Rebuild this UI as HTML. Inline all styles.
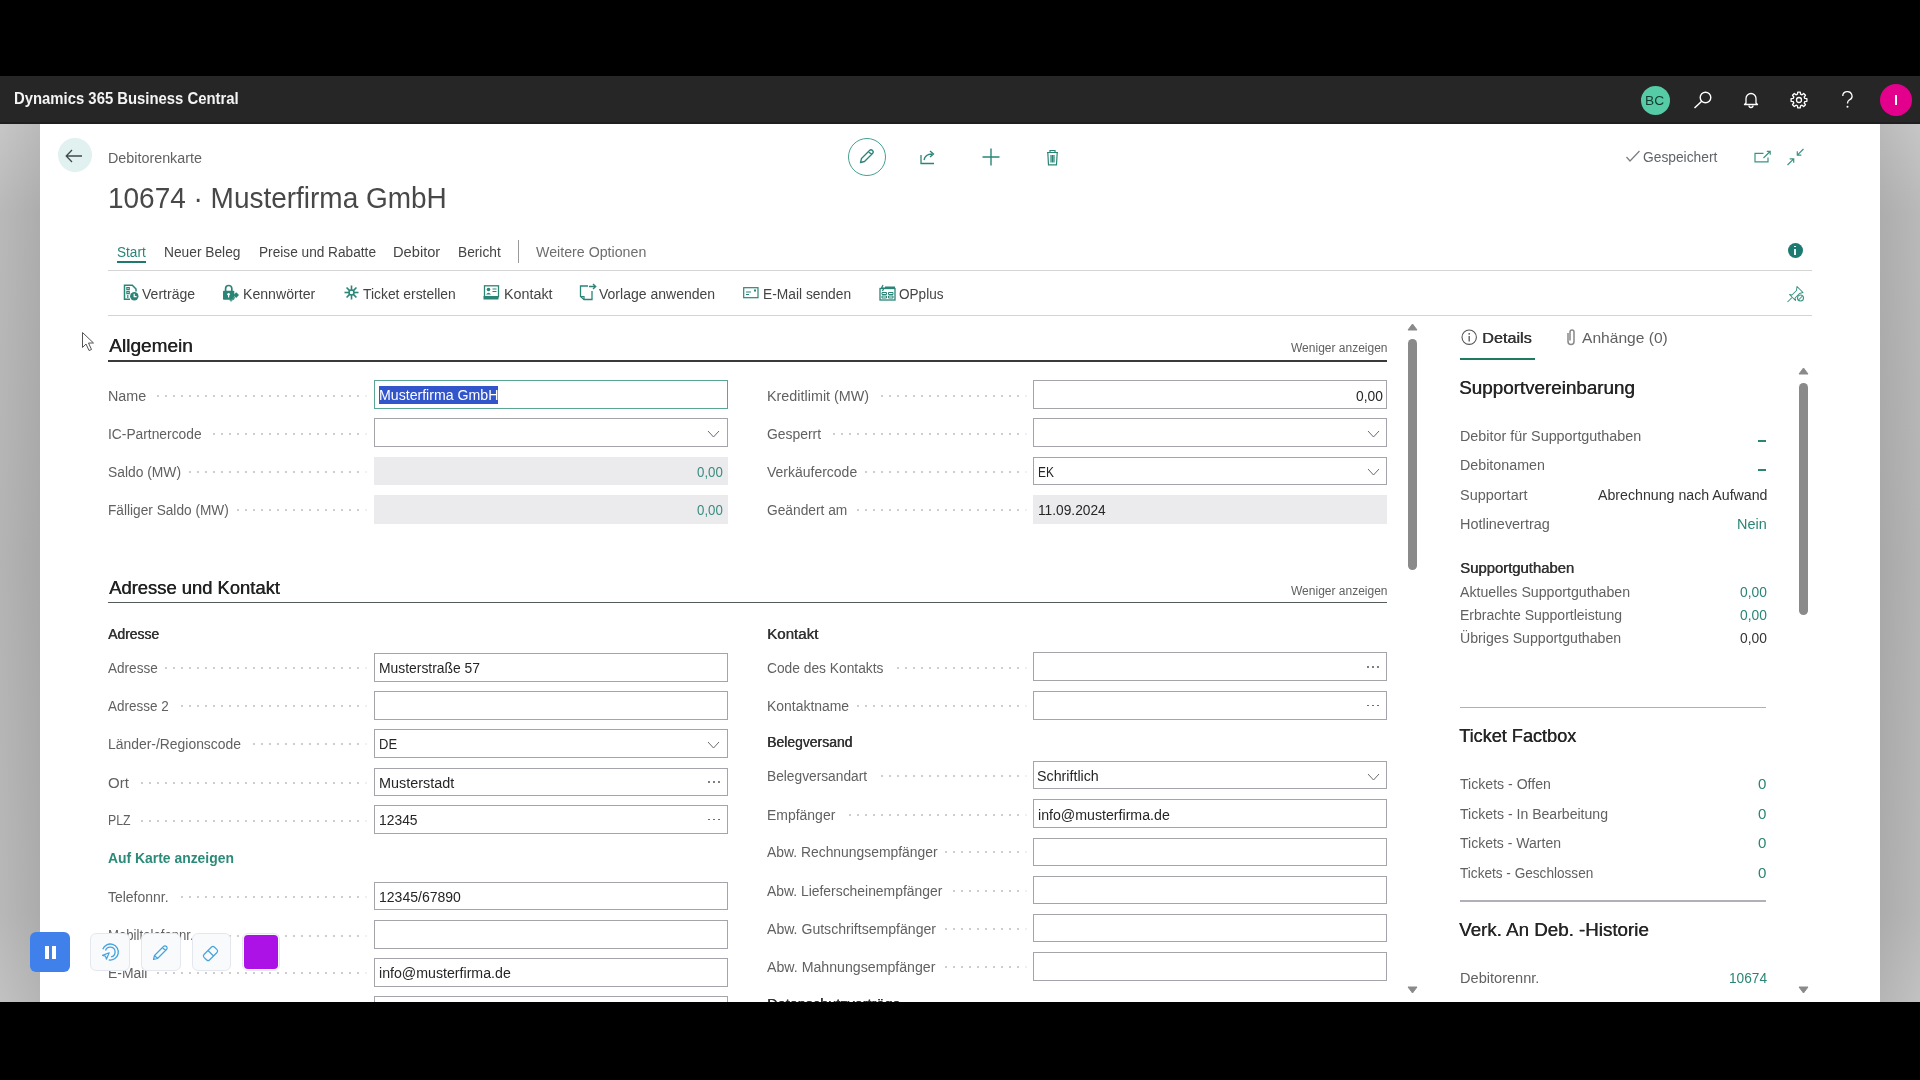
<!DOCTYPE html>
<html><head><meta charset="utf-8"><title>Debitorenkarte</title>
<style>
html,body{margin:0;padding:0;width:1920px;height:1080px;overflow:hidden;background:#000;}
body{position:relative;font-family:"Liberation Sans", sans-serif;}
.t{position:absolute;white-space:nowrap;display:inline-block;}
svg{overflow:visible}
</style></head><body>
<div style="position:absolute;left:0px;top:0px;width:1920px;height:76px;background:#000"></div>
<div style="position:absolute;left:0px;top:76px;width:1920px;height:48px;background:#262626"></div>
<div style="position:absolute;left:0px;top:122px;width:1920px;height:2px;background:#1e1e1e"></div>
<div style="position:absolute;left:0px;top:124px;width:40px;height:878px;background:linear-gradient(to bottom,#c4c4c4 0%,#b6b6b6 10%,#b1b1b1 50%,#b5b5b5 90%,#bfbfbf 100%)"></div>
<div style="position:absolute;left:0px;top:124px;width:40px;height:878px;background:linear-gradient(to right,rgba(255,255,255,0.04),rgba(0,0,0,0.05))"></div>
<div style="position:absolute;left:1880px;top:124px;width:40px;height:878px;background:linear-gradient(to bottom,#c4c4c4 0%,#b6b6b6 10%,#b1b1b1 50%,#b5b5b5 90%,#bfbfbf 100%)"></div>
<div style="position:absolute;left:1880px;top:124px;width:40px;height:878px;background:linear-gradient(to left,rgba(255,255,255,0.04),rgba(0,0,0,0.05))"></div>
<div style="position:absolute;left:40px;top:124px;width:1840px;height:878px;background:#fff"></div>
<span class="t" style="left:14.48px;top:89.93px;font-size:16.5px;line-height:16.5px;color:#f4f4f4;font-weight:700;transform:scaleX(0.9009);transform-origin:0 0;">Dynamics 365 Business Central</span>
<div style="position:absolute;left:1640.5px;top:85.5px;width:29px;height:29px;border-radius:50%;background:#55cca6"></div>
<span class="t" style="left:1644.85px;top:93.79px;font-size:13px;line-height:13px;color:#163a2e;font-weight:400;transform:scaleX(1.0578);transform-origin:0 0;">BC</span>
<svg style="position:absolute;left:1693px;top:91px" width="20" height="18" viewBox="0 0 20 18"><circle cx="12.5" cy="6.5" r="5.3" fill="none" stroke="#fff" stroke-width="1.4"/><line x1="8.7" y1="10.3" x2="1.5" y2="17" stroke="#fff" stroke-width="1.5"/></svg>
<svg style="position:absolute;left:1743px;top:92px" width="16" height="16" viewBox="0 0 16 16"><path d="M3 11 V6.5 A5 5 0 0 1 13 6.5 V11 L14.5 12.5 H1.5 Z" fill="none" stroke="#fff" stroke-width="1.3" stroke-linejoin="round"/><path d="M6 13.5 A2 2 0 0 0 10 13.5" fill="none" stroke="#fff" stroke-width="1.3"/></svg>
<svg style="position:absolute;left:1790px;top:92px" width="18" height="16" viewBox="0 0 18 16"><polygon points="14.80,6.46 16.90,6.73 16.90,9.27 14.80,9.54 14.19,11.01 15.49,12.68 13.68,14.49 12.01,13.19 10.54,13.80 10.27,15.90 7.73,15.90 7.46,13.80 5.99,13.19 4.32,14.49 2.51,12.68 3.81,11.01 3.20,9.54 1.10,9.27 1.10,6.73 3.20,6.46 3.81,4.99 2.51,3.32 4.32,1.51 5.99,2.81 7.46,2.20 7.73,0.10 10.27,0.10 10.54,2.20 12.01,2.81 13.68,1.51 15.49,3.32 14.19,4.99" fill="none" stroke="#fff" stroke-width="1.3" stroke-linejoin="round"/><circle cx="9" cy="8" r="2.5" fill="none" stroke="#fff" stroke-width="1.3"/></svg>
<svg style="position:absolute;left:1841px;top:91px" width="13" height="18" viewBox="0 0 13 18"><path d="M1.8 5 A4.6 4.3 0 1 1 8.5 8.8 C7 9.8 6.5 10.5 6.5 12.5" fill="none" stroke="#fff" stroke-width="1.3"/><circle cx="6.5" cy="15.8" r="1" fill="#fff"/></svg>
<div style="position:absolute;left:1880px;top:84px;width:32px;height:32px;border-radius:50%;background:#e3008c"></div>
<div style="position:absolute;left:1895.3px;top:95px;width:1.5px;height:10px;background:#fff"></div>
<div style="position:absolute;left:57.5px;top:138px;width:34px;height:34px;border-radius:50%;background:#e0f1ef"></div>
<svg style="position:absolute;left:65px;top:149px" width="18" height="14" viewBox="0 0 18 14"><path d="M7 1 L1.2 7 L7 13 M1.2 7 H17" fill="none" stroke="#3f4a4a" stroke-width="1.3"/></svg>
<span class="t" style="left:107.90px;top:150.55px;font-size:14px;line-height:14px;color:#616161;font-weight:400;transform:scaleX(1.0230);transform-origin:0 0;">Debitorenkarte</span>
<span class="t" style="left:107.53px;top:183.02px;font-size:29.5px;line-height:29.5px;color:#484848;font-weight:400;transform:scaleX(0.9478);transform-origin:0 0;">10674 · Musterfirma GmbH</span>
<div style="position:absolute;left:847.8px;top:138px;width:38px;height:38px;border-radius:50%;border:1.5px solid #45a090;box-sizing:border-box"></div>
<svg style="position:absolute;left:857px;top:148px" width="18" height="18" viewBox="0 0 18 18"><path d="M3.5 14.5 L4.5 10.5 L12.5 2.5 A1.4 1.4 0 0 1 15.5 5.5 L7.5 13.5 Z M11.5 3.5 L14.5 6.5" fill="none" stroke="#2a8577" stroke-width="1.3" stroke-linejoin="round"/></svg>
<svg style="position:absolute;left:919px;top:148px" width="18" height="17" viewBox="0 0 18 17"><path d="M2 7 V15.5 H15" fill="none" stroke="#2a8577" stroke-width="1.3"/><path d="M5 12 C6 7.5 9 6 13 6 M11 3 L14.5 6 L11 9" fill="none" stroke="#2a8577" stroke-width="1.3"/></svg>
<svg style="position:absolute;left:982px;top:148px" width="18" height="18" viewBox="0 0 18 18"><path d="M9 0.5 V17.5 M0.5 9 H17.5" stroke="#2a8577" stroke-width="1.4"/></svg>
<svg style="position:absolute;left:1045px;top:148px" width="15" height="18" viewBox="0 0 15 18"><path d="M2 4.5 H13 M5 4.5 V2.5 H10 V4.5 M2.8 4.5 L3.5 16.8 H11.5 L12.2 4.5 M6 7 V14.5 M7.5 7 V14.5 M9 7 V14.5" fill="none" stroke="#2a8577" stroke-width="1.2"/></svg>
<svg style="position:absolute;left:1625px;top:150px" width="16" height="13" viewBox="0 0 16 13"><path d="M1.5 7 L5 11 L14.5 1" fill="none" stroke="#7a7d82" stroke-width="1.2"/></svg>
<span class="t" style="left:1643.28px;top:150.22px;font-size:14.5px;line-height:14.5px;color:#5f646a;font-weight:400;transform:scaleX(0.9508);transform-origin:0 0;">Gespeichert</span>
<svg style="position:absolute;left:1753px;top:149px" width="19" height="15" viewBox="0 0 19 15"><path d="M10.5 4.4 H2 V12.9 H15 V8.5" fill="none" stroke="#3a9483" stroke-width="1.2"/><path d="M10.5 9 L17 2.5 M13.8 2.3 H17.2 V5.7" fill="none" stroke="#3a9483" stroke-width="1.2"/></svg>
<svg style="position:absolute;left:1786px;top:148px" width="19" height="18" viewBox="0 0 19 18"><path d="M17.5 1 L11.3 7.2 M11.3 3.2 V7.2 H15.3 M1.5 17 L7.7 10.8 M3.7 10.8 H7.7 V14.8" fill="none" stroke="#3a9483" stroke-width="1.2"/></svg>
<span class="t" style="left:117.30px;top:245.15px;font-size:14px;line-height:14px;color:#2a8577;font-weight:400;transform:scaleX(0.9707);transform-origin:0 0;">Start</span>
<div style="position:absolute;left:117px;top:261px;width:29px;height:2.2px;background:#1f7a6e"></div>
<span class="t" style="left:164.10px;top:245.15px;font-size:14px;line-height:14px;color:#444;font-weight:400;transform:scaleX(0.9823);transform-origin:0 0;">Neuer Beleg</span>
<span class="t" style="left:258.70px;top:245.15px;font-size:14px;line-height:14px;color:#444;font-weight:400;transform:scaleX(0.9760);transform-origin:0 0;">Preise und Rabatte</span>
<span class="t" style="left:393.30px;top:245.15px;font-size:14px;line-height:14px;color:#444;font-weight:400;transform:scaleX(1.0471);transform-origin:0 0;">Debitor</span>
<span class="t" style="left:458.30px;top:245.15px;font-size:14px;line-height:14px;color:#444;font-weight:400;transform:scaleX(0.9800);transform-origin:0 0;">Bericht</span>
<div style="position:absolute;left:518px;top:240px;width:1px;height:23px;background:#9a9a9a"></div>
<span class="t" style="left:536.00px;top:245.15px;font-size:14px;line-height:14px;color:#6e6e6e;font-weight:400;transform:scaleX(1.0149);transform-origin:0 0;">Weitere Optionen</span>
<div style="position:absolute;left:1787.5px;top:242.5px;width:15px;height:15px;border-radius:50%;background:#1d7a70"></div>
<div style="position:absolute;left:1794.3px;top:248.8px;width:1.4px;height:5.8px;background:#e8f4f2"></div>
<div style="position:absolute;left:1794.3px;top:245.8px;width:1.4px;height:1.5px;background:#e8f4f2"></div>
<div style="position:absolute;left:108px;top:270px;width:1704px;height:1.2px;background:#d4d4d4"></div>
<svg style="position:absolute;left:123px;top:284px" width="17" height="17" viewBox="0 0 17 17"><path d="M7 15.3 H1.5 V1.3 H9.3 L13 5 V7.5" fill="none" stroke="#2a8577" stroke-width="1.5"/><path d="M3.8 3.6 H6.3 V5.6 H3.8 Z M3.8 7.6 H6.3 V9.6 H3.8 Z" fill="none" stroke="#2a8577" stroke-width="1.1"/><path d="M4.8 11 V14" stroke="#2a8577" stroke-width="1.2"/><circle cx="11.3" cy="12.3" r="4.2" fill="#2a8577"/><path d="M11.2 9.8 V12.6 H13.6" fill="none" stroke="#fff" stroke-width="1.2"/></svg>
<span class="t" style="left:142.30px;top:287.15px;font-size:14px;line-height:14px;color:#444;font-weight:400;transform:scaleX(1.0023);transform-origin:0 0;">Verträge</span>
<svg style="position:absolute;left:222px;top:284px" width="18" height="17" viewBox="0 0 18 17"><path d="M3.6 7 V4.6 A3.1 3.1 0 0 1 9.8 4.6 V7" fill="none" stroke="#2a8577" stroke-width="1.7"/><rect x="1" y="6.8" width="11.3" height="9" rx="0.8" fill="#2a8577"/><circle cx="6.6" cy="10.3" r="1.3" fill="#fff"/><rect x="6" y="10.5" width="1.2" height="3" fill="#fff"/><path d="M14.2 8.3 L17 11.1 L14.2 13.9 L11.4 11.1 Z" fill="#2a8577"/><path d="M12.5 12.8 L8.3 17" stroke="#2a8577" stroke-width="2.2"/><path d="M12.2 13.4 L8.6 17" stroke="#fff" stroke-width="0.6" stroke-dasharray="1 1"/></svg>
<span class="t" style="left:243.00px;top:287.15px;font-size:14px;line-height:14px;color:#444;font-weight:400;transform:scaleX(1.0086);transform-origin:0 0;">Kennwörter</span>
<svg style="position:absolute;left:344px;top:285px" width="15" height="15" viewBox="0 0 15 15"><line x1="9.50" y1="7.50" x2="14.50" y2="7.50" stroke="#2a8577" stroke-width="1.6"/><line x1="8.91" y1="8.91" x2="12.45" y2="12.45" stroke="#2a8577" stroke-width="1.6"/><line x1="7.50" y1="9.50" x2="7.50" y2="14.50" stroke="#2a8577" stroke-width="1.6"/><line x1="6.09" y1="8.91" x2="2.55" y2="12.45" stroke="#2a8577" stroke-width="1.6"/><line x1="5.50" y1="7.50" x2="0.50" y2="7.50" stroke="#2a8577" stroke-width="1.6"/><line x1="6.09" y1="6.09" x2="2.55" y2="2.55" stroke="#2a8577" stroke-width="1.6"/><line x1="7.50" y1="5.50" x2="7.50" y2="0.50" stroke="#2a8577" stroke-width="1.6"/><line x1="8.91" y1="6.09" x2="12.45" y2="2.55" stroke="#2a8577" stroke-width="1.6"/><circle cx="7.5" cy="7.5" r="2.5" fill="none" stroke="#2a8577" stroke-width="1.4"/></svg>
<span class="t" style="left:363.30px;top:287.15px;font-size:14px;line-height:14px;color:#444;font-weight:400;transform:scaleX(0.9906);transform-origin:0 0;">Ticket erstellen</span>
<svg style="position:absolute;left:483px;top:285px" width="17" height="15" viewBox="0 0 17 15"><rect x="1.5" y="0.8" width="14" height="11" fill="none" stroke="#2a8577" stroke-width="1.3"/><circle cx="5.5" cy="4.5" r="1.8" fill="#2a8577"/><path d="M3 9.5 Q5.5 6 8 9.5 Z" fill="#2a8577"/><path d="M9.5 4 H13.5 M9.5 6.5 H13.5" stroke="#2a8577" stroke-width="1.2"/><rect x="0.5" y="11" width="15" height="3.5" fill="#2a8577"/></svg>
<span class="t" style="left:503.80px;top:287.15px;font-size:14px;line-height:14px;color:#444;font-weight:400;transform:scaleX(1.0238);transform-origin:0 0;">Kontakt</span>
<svg style="position:absolute;left:579px;top:283px" width="18" height="18" viewBox="0 0 18 18"><path d="M9 3 H1.5 V13.5 L5 16.5 H13 V8" fill="none" stroke="#2a8577" stroke-width="1.3"/><path d="M1.5 13.5 H5 V16.5" fill="none" stroke="#2a8577" stroke-width="1.2"/><path d="M10 3.5 H16.5 M14 1 L16.7 3.5 L14 6" fill="none" stroke="#2a8577" stroke-width="1.3"/></svg>
<span class="t" style="left:599.30px;top:287.15px;font-size:14px;line-height:14px;color:#444;font-weight:400;transform:scaleX(1.0010);transform-origin:0 0;">Vorlage anwenden</span>
<svg style="position:absolute;left:743px;top:287px" width="16" height="12" viewBox="0 0 16 12"><rect x="0.7" y="0.7" width="14.3" height="10" fill="none" stroke="#2a8577" stroke-width="1.2"/><path d="M3 5 H8 M3 7.5 H6" stroke="#2a8577" stroke-width="1.2"/><rect x="11" y="2.5" width="2" height="2" fill="#2a8577"/></svg>
<span class="t" style="left:762.90px;top:287.15px;font-size:14px;line-height:14px;color:#444;font-weight:400;transform:scaleX(0.9847);transform-origin:0 0;">E-Mail senden</span>
<svg style="position:absolute;left:879px;top:284px" width="17" height="17" viewBox="0 0 17 17"><path d="M4 1 L2.5 4 H5 L3.5 7" fill="none" stroke="#2a8577" stroke-width="1.2"/><rect x="1" y="4.5" width="15" height="11.5" fill="none" stroke="#2a8577" stroke-width="1.3"/><rect x="6" y="2.5" width="10" height="2" fill="#2a8577"/><path d="M3 8.5 H7.5 V10.5 H3 Z M9.5 8.5 H14 V10.5 H9.5 Z M3 12 H7.5 V14 H3 Z M9.5 12 H14 V14 H9.5 Z" fill="none" stroke="#2a8577" stroke-width="1"/></svg>
<span class="t" style="left:899.30px;top:287.15px;font-size:14px;line-height:14px;color:#444;font-weight:400;transform:scaleX(0.9700);transform-origin:0 0;">OPplus</span>
<svg style="position:absolute;left:1786px;top:285px" width="19" height="17" viewBox="0 0 19 17"><path d="M11 1.5 L17 7.5 L13.5 8.5 L9 13 L9.5 15.5 L3.5 9.5 L6 10 L10.5 5.5 Z" fill="none" stroke="#3a9483" stroke-width="1.05" stroke-linejoin="round"/><path d="M6 12.5 L1.5 17" stroke="#3a9483" stroke-width="1.05"/><circle cx="14.5" cy="13" r="3" fill="#fff" stroke="#3a9483" stroke-width="1.05"/><path d="M12.5 15 L16.5 11" stroke="#3a9483" stroke-width="1.05"/></svg>
<div style="position:absolute;left:108px;top:315px;width:1704px;height:1.2px;background:#d4d4d4"></div>
<svg style="position:absolute;left:81px;top:331px" width="14" height="21" viewBox="0 0 14 21"><path d="M1.5 1.5 V16.5 L5 13 L8 19.5 L10.5 18.5 L7.5 12 H12.5 Z" fill="#fff" stroke="#555" stroke-width="1"/></svg>
<span class="t" style="left:108.58px;top:337.34px;font-size:18.5px;line-height:18.5px;color:#222;font-weight:400;transform:scaleX(1.0306);transform-origin:0 0;text-shadow:0.45px 0 0 currentColor;">Allgemein</span>
<span class="t" style="left:1290.88px;top:342.22px;font-size:12.5px;line-height:12.5px;color:#616161;font-weight:400;transform:scaleX(0.9604);transform-origin:0 0;">Weniger anzeigen</span>
<div style="position:absolute;left:108px;top:360px;width:1279px;height:2px;background:#3a3a3a"></div>
<span class="t" style="left:108.05px;top:388.65px;font-size:14px;line-height:14px;color:#616161;font-weight:400;transform:scaleX(1.0235);transform-origin:0 0;">Name</span>
<div style="position:absolute;left:157px;top:394.7px;width:210px;height:2px;background:linear-gradient(to right,#cdcdcd 1.8px,transparent 1.8px) 0 0/8px 2px repeat-x;-webkit-mask-image:linear-gradient(to left,rgba(0,0,0,0.3) 0,rgba(0,0,0,0.3) 3px,#000 4px)"></div>
<span class="t" style="left:108.05px;top:426.90px;font-size:14px;line-height:14px;color:#616161;font-weight:400;transform:scaleX(0.9855);transform-origin:0 0;">IC-Partnercode</span>
<div style="position:absolute;left:213px;top:432.95px;width:154px;height:2px;background:linear-gradient(to right,#cdcdcd 1.8px,transparent 1.8px) 0 0/8px 2px repeat-x;-webkit-mask-image:linear-gradient(to left,rgba(0,0,0,0.3) 0,rgba(0,0,0,0.3) 3px,#000 4px)"></div>
<span class="t" style="left:108.05px;top:465.15px;font-size:14px;line-height:14px;color:#616161;font-weight:400;transform:scaleX(0.9881);transform-origin:0 0;">Saldo (MW)</span>
<div style="position:absolute;left:189px;top:471.2px;width:178px;height:2px;background:linear-gradient(to right,#cdcdcd 1.8px,transparent 1.8px) 0 0/8px 2px repeat-x;-webkit-mask-image:linear-gradient(to left,rgba(0,0,0,0.3) 0,rgba(0,0,0,0.3) 3px,#000 4px)"></div>
<span class="t" style="left:108.05px;top:503.40px;font-size:14px;line-height:14px;color:#616161;font-weight:400;transform:scaleX(0.9768);transform-origin:0 0;">Fälliger Saldo (MW)</span>
<div style="position:absolute;left:237px;top:509.45px;width:130px;height:2px;background:linear-gradient(to right,#cdcdcd 1.8px,transparent 1.8px) 0 0/8px 2px repeat-x;-webkit-mask-image:linear-gradient(to left,rgba(0,0,0,0.3) 0,rgba(0,0,0,0.3) 3px,#000 4px)"></div>
<div style="position:absolute;left:373.5px;top:380.2px;width:354.0px;height:29px;border:1.7px solid #5aa593;box-sizing:border-box;background:#fff"></div>
<div style="position:absolute;left:378.5px;top:385.5px;width:119px;height:18.3px;background:#3355cc"></div>
<span class="t" style="left:378.90px;top:388.15px;font-size:14px;line-height:14px;color:#ffffff;font-weight:400;transform:scaleX(1.0095);transform-origin:0 0;">Musterfirma GmbH</span>
<div style="position:absolute;left:373.5px;top:418.2px;width:354.0px;height:29px;border:1.5px solid #a4a4ab;box-sizing:border-box;background:#fff"></div>
<svg style="position:absolute;left:707.0px;top:429.7px" width="13" height="8" viewBox="0 0 13 8"><path d="M1 1 L6.5 7 L12 1" fill="none" stroke="#6a6a6a" stroke-width="1"/></svg>
<div style="position:absolute;left:373.5px;top:457px;width:354.0px;height:28px;background:#ebebee"></div>
<span class="t" style="left:697.36px;top:465.15px;font-size:14px;line-height:14px;color:#3a8c80;font-weight:400;transform:scaleX(0.9489);transform-origin:0 0;">0,00</span>
<div style="position:absolute;left:373.5px;top:495px;width:354.0px;height:28.5px;background:#ebebee"></div>
<span class="t" style="left:697.36px;top:503.40px;font-size:14px;line-height:14px;color:#3a8c80;font-weight:400;transform:scaleX(0.9489);transform-origin:0 0;">0,00</span>
<span class="t" style="left:767.30px;top:388.65px;font-size:14px;line-height:14px;color:#616161;font-weight:400;transform:scaleX(1.0262);transform-origin:0 0;">Kreditlimit (MW)</span>
<div style="position:absolute;left:881px;top:394.7px;width:146px;height:2px;background:linear-gradient(to right,#cdcdcd 1.8px,transparent 1.8px) 0 0/8px 2px repeat-x;-webkit-mask-image:linear-gradient(to left,rgba(0,0,0,0.3) 0,rgba(0,0,0,0.3) 3px,#000 4px)"></div>
<span class="t" style="left:767.30px;top:426.90px;font-size:14px;line-height:14px;color:#616161;font-weight:400;transform:scaleX(0.9930);transform-origin:0 0;">Gesperrt</span>
<div style="position:absolute;left:833px;top:432.95px;width:194px;height:2px;background:linear-gradient(to right,#cdcdcd 1.8px,transparent 1.8px) 0 0/8px 2px repeat-x;-webkit-mask-image:linear-gradient(to left,rgba(0,0,0,0.3) 0,rgba(0,0,0,0.3) 3px,#000 4px)"></div>
<span class="t" style="left:767.30px;top:465.15px;font-size:14px;line-height:14px;color:#616161;font-weight:400;transform:scaleX(0.9986);transform-origin:0 0;">Verkäufercode</span>
<div style="position:absolute;left:865px;top:471.2px;width:162px;height:2px;background:linear-gradient(to right,#cdcdcd 1.8px,transparent 1.8px) 0 0/8px 2px repeat-x;-webkit-mask-image:linear-gradient(to left,rgba(0,0,0,0.3) 0,rgba(0,0,0,0.3) 3px,#000 4px)"></div>
<span class="t" style="left:767.30px;top:503.40px;font-size:14px;line-height:14px;color:#616161;font-weight:400;transform:scaleX(0.9832);transform-origin:0 0;">Geändert am</span>
<div style="position:absolute;left:857px;top:509.45px;width:170px;height:2px;background:linear-gradient(to right,#cdcdcd 1.8px,transparent 1.8px) 0 0/8px 2px repeat-x;-webkit-mask-image:linear-gradient(to left,rgba(0,0,0,0.3) 0,rgba(0,0,0,0.3) 3px,#000 4px)"></div>
<div style="position:absolute;left:1033.2px;top:380.2px;width:353.79999999999995px;height:29.3px;border:1.5px solid #a4a4ab;box-sizing:border-box;background:#fff"></div>
<span class="t" style="left:1356.36px;top:388.65px;font-size:14px;line-height:14px;color:#262626;font-weight:400;transform:scaleX(0.9859);transform-origin:0 0;">0,00</span>
<div style="position:absolute;left:1033.2px;top:418.2px;width:353.79999999999995px;height:28.8px;border:1.5px solid #a4a4ab;box-sizing:border-box;background:#fff"></div>
<svg style="position:absolute;left:1366.5px;top:429.7px" width="13" height="8" viewBox="0 0 13 8"><path d="M1 1 L6.5 7 L12 1" fill="none" stroke="#6a6a6a" stroke-width="1"/></svg>
<div style="position:absolute;left:1033.2px;top:456.5px;width:353.79999999999995px;height:28.8px;border:1.5px solid #a4a4ab;box-sizing:border-box;background:#fff"></div>
<svg style="position:absolute;left:1366.5px;top:468.0px" width="13" height="8" viewBox="0 0 13 8"><path d="M1 1 L6.5 7 L12 1" fill="none" stroke="#6a6a6a" stroke-width="1"/></svg>
<span class="t" style="left:1037.90px;top:465.15px;font-size:14px;line-height:14px;color:#262626;font-weight:400;transform:scaleX(0.8484);transform-origin:0 0;">EK</span>
<div style="position:absolute;left:1033.2px;top:495px;width:353.79999999999995px;height:28.5px;background:#ebebee"></div>
<span class="t" style="left:1037.90px;top:503.40px;font-size:14px;line-height:14px;color:#262626;font-weight:400;transform:scaleX(0.9800);transform-origin:0 0;">11.09.2024</span>
<svg style="position:absolute;left:1407px;top:323px" width="11" height="8" viewBox="0 0 11 8"><path d="M1 7 L5.5 1 L10 7 Z" fill="#8a8a8a" stroke="#8a8a8a" stroke-linejoin="round"/></svg>
<div style="position:absolute;left:1408.2px;top:339px;width:8.8px;height:230.5px;background:#8a8a8a;border-radius:4.4px"></div>
<svg style="position:absolute;left:1407px;top:986px" width="11" height="8" viewBox="0 0 11 8"><path d="M1 1 L5.5 7 L10 1 Z" fill="#8a8a8a" stroke="#8a8a8a" stroke-linejoin="round"/></svg>
<span class="t" style="left:108.58px;top:579.34px;font-size:18.5px;line-height:18.5px;color:#222;font-weight:400;transform:scaleX(0.9941);transform-origin:0 0;text-shadow:0.45px 0 0 currentColor;">Adresse und Kontakt</span>
<span class="t" style="left:1290.88px;top:584.62px;font-size:12.5px;line-height:12.5px;color:#616161;font-weight:400;transform:scaleX(0.9604);transform-origin:0 0;">Weniger anzeigen</span>
<div style="position:absolute;left:108px;top:602px;width:1279px;height:1.3px;background:#555b5b"></div>
<span class="t" style="left:108.05px;top:626.90px;font-size:14px;line-height:14px;color:#333;font-weight:400;transform:scaleX(0.9925);transform-origin:0 0;text-shadow:0.45px 0 0 currentColor;">Adresse</span>
<span class="t" style="left:108.05px;top:661.15px;font-size:14px;line-height:14px;color:#616161;font-weight:400;transform:scaleX(0.9680);transform-origin:0 0;">Adresse</span>
<div style="position:absolute;left:165px;top:667.2px;width:202px;height:2px;background:linear-gradient(to right,#cdcdcd 1.8px,transparent 1.8px) 0 0/8px 2px repeat-x;-webkit-mask-image:linear-gradient(to left,rgba(0,0,0,0.3) 0,rgba(0,0,0,0.3) 3px,#000 4px)"></div>
<div style="position:absolute;left:373.5px;top:653px;width:354.0px;height:28.5px;border:1.5px solid #a4a4ab;box-sizing:border-box;background:#fff"></div>
<span class="t" style="left:108.05px;top:699.40px;font-size:14px;line-height:14px;color:#616161;font-weight:400;transform:scaleX(0.9622);transform-origin:0 0;">Adresse 2</span>
<div style="position:absolute;left:181px;top:705.45px;width:186px;height:2px;background:linear-gradient(to right,#cdcdcd 1.8px,transparent 1.8px) 0 0/8px 2px repeat-x;-webkit-mask-image:linear-gradient(to left,rgba(0,0,0,0.3) 0,rgba(0,0,0,0.3) 3px,#000 4px)"></div>
<div style="position:absolute;left:373.5px;top:691.25px;width:354.0px;height:28.5px;border:1.5px solid #a4a4ab;box-sizing:border-box;background:#fff"></div>
<span class="t" style="left:108.05px;top:737.40px;font-size:14px;line-height:14px;color:#616161;font-weight:400;transform:scaleX(0.9934);transform-origin:0 0;">Länder-/Regionscode</span>
<div style="position:absolute;left:253px;top:743.45px;width:114px;height:2px;background:linear-gradient(to right,#cdcdcd 1.8px,transparent 1.8px) 0 0/8px 2px repeat-x;-webkit-mask-image:linear-gradient(to left,rgba(0,0,0,0.3) 0,rgba(0,0,0,0.3) 3px,#000 4px)"></div>
<div style="position:absolute;left:373.5px;top:729.25px;width:354.0px;height:28.5px;border:1.5px solid #a4a4ab;box-sizing:border-box;background:#fff"></div>
<span class="t" style="left:108.05px;top:775.65px;font-size:14px;line-height:14px;color:#616161;font-weight:400;transform:scaleX(1.0721);transform-origin:0 0;">Ort</span>
<div style="position:absolute;left:141px;top:781.7px;width:226px;height:2px;background:linear-gradient(to right,#cdcdcd 1.8px,transparent 1.8px) 0 0/8px 2px repeat-x;-webkit-mask-image:linear-gradient(to left,rgba(0,0,0,0.3) 0,rgba(0,0,0,0.3) 3px,#000 4px)"></div>
<div style="position:absolute;left:373.5px;top:767.5px;width:354.0px;height:28.5px;border:1.5px solid #a4a4ab;box-sizing:border-box;background:#fff"></div>
<span class="t" style="left:108.05px;top:813.45px;font-size:14px;line-height:14px;color:#616161;font-weight:400;transform:scaleX(0.8815);transform-origin:0 0;">PLZ</span>
<div style="position:absolute;left:141px;top:819.5px;width:226px;height:2px;background:linear-gradient(to right,#cdcdcd 1.8px,transparent 1.8px) 0 0/8px 2px repeat-x;-webkit-mask-image:linear-gradient(to left,rgba(0,0,0,0.3) 0,rgba(0,0,0,0.3) 3px,#000 4px)"></div>
<div style="position:absolute;left:373.5px;top:805px;width:354.0px;height:28.5px;border:1.5px solid #a4a4ab;box-sizing:border-box;background:#fff"></div>
<span class="t" style="left:378.80px;top:661.15px;font-size:14px;line-height:14px;color:#262626;font-weight:400;transform:scaleX(0.9914);transform-origin:0 0;">Musterstraße 57</span>
<svg style="position:absolute;left:707.0px;top:740.75px" width="13" height="8" viewBox="0 0 13 8"><path d="M1 1 L6.5 7 L12 1" fill="none" stroke="#6a6a6a" stroke-width="1"/></svg>
<span class="t" style="left:378.80px;top:737.40px;font-size:14px;line-height:14px;color:#262626;font-weight:400;transform:scaleX(0.9274);transform-origin:0 0;">DE</span>
<span class="t" style="left:378.80px;top:775.65px;font-size:14px;line-height:14px;color:#262626;font-weight:400;transform:scaleX(1.0290);transform-origin:0 0;">Musterstadt</span>
<div style="position:absolute;left:708px;top:781.1px;width:1.8px;height:1.8px;background:#5a5a5a;border-radius:50%"></div>
<div style="position:absolute;left:713px;top:781.1px;width:1.8px;height:1.8px;background:#5a5a5a;border-radius:50%"></div>
<div style="position:absolute;left:718px;top:781.1px;width:1.8px;height:1.8px;background:#5a5a5a;border-radius:50%"></div>
<span class="t" style="left:378.90px;top:813.45px;font-size:14px;line-height:14px;color:#262626;font-weight:400;transform:scaleX(0.9903);transform-origin:0 0;">12345</span>
<div style="position:absolute;left:708px;top:818.6px;width:1.8px;height:1.8px;background:#5a5a5a;border-radius:50%"></div>
<div style="position:absolute;left:713px;top:818.6px;width:1.8px;height:1.8px;background:#5a5a5a;border-radius:50%"></div>
<div style="position:absolute;left:718px;top:818.6px;width:1.8px;height:1.8px;background:#5a5a5a;border-radius:50%"></div>
<span class="t" style="left:108.30px;top:851.45px;font-size:14px;line-height:14px;color:#2b8a78;font-weight:700;transform:scaleX(0.9931);transform-origin:0 0;">Auf Karte anzeigen</span>
<span class="t" style="left:108.05px;top:889.95px;font-size:14px;line-height:14px;color:#616161;font-weight:400;transform:scaleX(0.9970);transform-origin:0 0;">Telefonnr.</span>
<div style="position:absolute;left:181px;top:896.0px;width:186px;height:2px;background:linear-gradient(to right,#cdcdcd 1.8px,transparent 1.8px) 0 0/8px 2px repeat-x;-webkit-mask-image:linear-gradient(to left,rgba(0,0,0,0.3) 0,rgba(0,0,0,0.3) 3px,#000 4px)"></div>
<div style="position:absolute;left:373.5px;top:881.5px;width:354.0px;height:28.5px;border:1.5px solid #a4a4ab;box-sizing:border-box;background:#fff"></div>
<span class="t" style="left:108.05px;top:928.45px;font-size:14px;line-height:14px;color:#616161;font-weight:400;transform:scaleX(0.9409);transform-origin:0 0;">Mobiltelefonnr.</span>
<div style="position:absolute;left:205px;top:934.5px;width:162px;height:2px;background:linear-gradient(to right,#cdcdcd 1.8px,transparent 1.8px) 0 0/8px 2px repeat-x;-webkit-mask-image:linear-gradient(to left,rgba(0,0,0,0.3) 0,rgba(0,0,0,0.3) 3px,#000 4px)"></div>
<div style="position:absolute;left:373.5px;top:920.4px;width:354.0px;height:28.5px;border:1.5px solid #a4a4ab;box-sizing:border-box;background:#fff"></div>
<span class="t" style="left:108.05px;top:965.95px;font-size:14px;line-height:14px;color:#616161;font-weight:400;transform:scaleX(0.9930);transform-origin:0 0;">E-Mail</span>
<div style="position:absolute;left:157px;top:972.0px;width:210px;height:2px;background:linear-gradient(to right,#cdcdcd 1.8px,transparent 1.8px) 0 0/8px 2px repeat-x;-webkit-mask-image:linear-gradient(to left,rgba(0,0,0,0.3) 0,rgba(0,0,0,0.3) 3px,#000 4px)"></div>
<div style="position:absolute;left:373.5px;top:958.3px;width:354.0px;height:28.5px;border:1.5px solid #a4a4ab;box-sizing:border-box;background:#fff"></div>
<span class="t" style="left:378.90px;top:889.95px;font-size:14px;line-height:14px;color:#262626;font-weight:400;transform:scaleX(1.0015);transform-origin:0 0;">12345/67890</span>
<span class="t" style="left:378.90px;top:965.95px;font-size:14px;line-height:14px;color:#262626;font-weight:400;transform:scaleX(1.0125);transform-origin:0 0;">info@musterfirma.de</span>
<div style="position:absolute;left:373.5px;top:996.2px;width:354.0px;height:28.5px;border:1.5px solid #a4a4ab;box-sizing:border-box;background:#fff"></div>
<span class="t" style="left:767.30px;top:626.90px;font-size:14px;line-height:14px;color:#333;font-weight:400;transform:scaleX(1.0770);transform-origin:0 0;text-shadow:0.45px 0 0 currentColor;">Kontakt</span>
<span class="t" style="left:767.30px;top:661.15px;font-size:14px;line-height:14px;color:#616161;font-weight:400;transform:scaleX(0.9841);transform-origin:0 0;">Code des Kontakts</span>
<div style="position:absolute;left:897px;top:667.2px;width:130px;height:2px;background:linear-gradient(to right,#cdcdcd 1.8px,transparent 1.8px) 0 0/8px 2px repeat-x;-webkit-mask-image:linear-gradient(to left,rgba(0,0,0,0.3) 0,rgba(0,0,0,0.3) 3px,#000 4px)"></div>
<div style="position:absolute;left:1033.2px;top:652.3px;width:353.79999999999995px;height:29px;border:1.5px solid #a4a4ab;box-sizing:border-box;background:#fff"></div>
<div style="position:absolute;left:1367px;top:666.1px;width:1.8px;height:1.8px;background:#5a5a5a;border-radius:50%"></div>
<div style="position:absolute;left:1372px;top:666.1px;width:1.8px;height:1.8px;background:#5a5a5a;border-radius:50%"></div>
<div style="position:absolute;left:1377px;top:666.1px;width:1.8px;height:1.8px;background:#5a5a5a;border-radius:50%"></div>
<span class="t" style="left:767.30px;top:699.40px;font-size:14px;line-height:14px;color:#616161;font-weight:400;transform:scaleX(0.9954);transform-origin:0 0;">Kontaktname</span>
<div style="position:absolute;left:857px;top:705.45px;width:170px;height:2px;background:linear-gradient(to right,#cdcdcd 1.8px,transparent 1.8px) 0 0/8px 2px repeat-x;-webkit-mask-image:linear-gradient(to left,rgba(0,0,0,0.3) 0,rgba(0,0,0,0.3) 3px,#000 4px)"></div>
<div style="position:absolute;left:1033.2px;top:691px;width:353.79999999999995px;height:28.6px;border:1.5px solid #a4a4ab;box-sizing:border-box;background:#fff"></div>
<div style="position:absolute;left:1367px;top:704.6px;width:1.8px;height:1.8px;background:#5a5a5a;border-radius:50%"></div>
<div style="position:absolute;left:1372px;top:704.6px;width:1.8px;height:1.8px;background:#5a5a5a;border-radius:50%"></div>
<div style="position:absolute;left:1377px;top:704.6px;width:1.8px;height:1.8px;background:#5a5a5a;border-radius:50%"></div>
<span class="t" style="left:767.30px;top:735.15px;font-size:14px;line-height:14px;color:#333;font-weight:400;transform:scaleX(0.9956);transform-origin:0 0;text-shadow:0.45px 0 0 currentColor;">Belegversand</span>
<span class="t" style="left:767.30px;top:769.40px;font-size:14px;line-height:14px;color:#616161;font-weight:400;transform:scaleX(0.9816);transform-origin:0 0;">Belegversandart</span>
<div style="position:absolute;left:881px;top:775.45px;width:146px;height:2px;background:linear-gradient(to right,#cdcdcd 1.8px,transparent 1.8px) 0 0/8px 2px repeat-x;-webkit-mask-image:linear-gradient(to left,rgba(0,0,0,0.3) 0,rgba(0,0,0,0.3) 3px,#000 4px)"></div>
<div style="position:absolute;left:1033.2px;top:761.4px;width:353.79999999999995px;height:28px;border:1.5px solid #a4a4ab;box-sizing:border-box;background:#fff"></div>
<svg style="position:absolute;left:1366.5px;top:772.5px" width="13" height="8" viewBox="0 0 13 8"><path d="M1 1 L6.5 7 L12 1" fill="none" stroke="#6a6a6a" stroke-width="1"/></svg>
<span class="t" style="left:1037.10px;top:769.40px;font-size:14px;line-height:14px;color:#262626;font-weight:400;transform:scaleX(1.0184);transform-origin:0 0;">Schriftlich</span>
<span class="t" style="left:767.30px;top:807.65px;font-size:14px;line-height:14px;color:#616161;font-weight:400;transform:scaleX(0.9974);transform-origin:0 0;">Empfänger</span>
<div style="position:absolute;left:849px;top:813.7px;width:178px;height:2px;background:linear-gradient(to right,#cdcdcd 1.8px,transparent 1.8px) 0 0/8px 2px repeat-x;-webkit-mask-image:linear-gradient(to left,rgba(0,0,0,0.3) 0,rgba(0,0,0,0.3) 3px,#000 4px)"></div>
<div style="position:absolute;left:1033.2px;top:799.2px;width:353.79999999999995px;height:28.4px;border:1.5px solid #a4a4ab;box-sizing:border-box;background:#fff"></div>
<span class="t" style="left:767.30px;top:845.15px;font-size:14px;line-height:14px;color:#616161;font-weight:400;transform:scaleX(0.9914);transform-origin:0 0;">Abw. Rechnungsempfänger</span>
<div style="position:absolute;left:945px;top:851.2px;width:82px;height:2px;background:linear-gradient(to right,#cdcdcd 1.8px,transparent 1.8px) 0 0/8px 2px repeat-x;-webkit-mask-image:linear-gradient(to left,rgba(0,0,0,0.3) 0,rgba(0,0,0,0.3) 3px,#000 4px)"></div>
<div style="position:absolute;left:1033.2px;top:837.6px;width:353.79999999999995px;height:28.4px;border:1.5px solid #a4a4ab;box-sizing:border-box;background:#fff"></div>
<span class="t" style="left:767.30px;top:883.55px;font-size:14px;line-height:14px;color:#616161;font-weight:400;transform:scaleX(0.9922);transform-origin:0 0;">Abw. Lieferscheinempfänger</span>
<div style="position:absolute;left:953px;top:889.6px;width:74px;height:2px;background:linear-gradient(to right,#cdcdcd 1.8px,transparent 1.8px) 0 0/8px 2px repeat-x;-webkit-mask-image:linear-gradient(to left,rgba(0,0,0,0.3) 0,rgba(0,0,0,0.3) 3px,#000 4px)"></div>
<div style="position:absolute;left:1033.2px;top:875.7px;width:353.79999999999995px;height:28.4px;border:1.5px solid #a4a4ab;box-sizing:border-box;background:#fff"></div>
<span class="t" style="left:767.30px;top:921.75px;font-size:14px;line-height:14px;color:#616161;font-weight:400;transform:scaleX(1.0055);transform-origin:0 0;">Abw. Gutschriftsempfänger</span>
<div style="position:absolute;left:945px;top:927.8000000000001px;width:82px;height:2px;background:linear-gradient(to right,#cdcdcd 1.8px,transparent 1.8px) 0 0/8px 2px repeat-x;-webkit-mask-image:linear-gradient(to left,rgba(0,0,0,0.3) 0,rgba(0,0,0,0.3) 3px,#000 4px)"></div>
<div style="position:absolute;left:1033.2px;top:914px;width:353.79999999999995px;height:28.4px;border:1.5px solid #a4a4ab;box-sizing:border-box;background:#fff"></div>
<span class="t" style="left:767.30px;top:959.85px;font-size:14px;line-height:14px;color:#616161;font-weight:400;transform:scaleX(1.0115);transform-origin:0 0;">Abw. Mahnungsempfänger</span>
<div style="position:absolute;left:945px;top:965.9000000000001px;width:82px;height:2px;background:linear-gradient(to right,#cdcdcd 1.8px,transparent 1.8px) 0 0/8px 2px repeat-x;-webkit-mask-image:linear-gradient(to left,rgba(0,0,0,0.3) 0,rgba(0,0,0,0.3) 3px,#000 4px)"></div>
<div style="position:absolute;left:1033.2px;top:952.4px;width:353.79999999999995px;height:28.4px;border:1.5px solid #a4a4ab;box-sizing:border-box;background:#fff"></div>
<span class="t" style="left:1037.90px;top:807.65px;font-size:14px;line-height:14px;color:#262626;font-weight:400;transform:scaleX(1.0125);transform-origin:0 0;">info@musterfirma.de</span>
<span class="t" style="left:767.30px;top:996.75px;font-size:14px;line-height:14px;color:#333;font-weight:400;transform:scaleX(1.0319);transform-origin:0 0;text-shadow:0.45px 0 0 currentColor;">Datenschutzverträge</span>
<svg style="position:absolute;left:1461px;top:329px" width="17" height="17" viewBox="0 0 17 17"><circle cx="8.2" cy="8.2" r="7.2" fill="none" stroke="#555" stroke-width="1.1"/><path d="M8.2 7 V12.5" stroke="#555" stroke-width="1.3"/><circle cx="8.2" cy="4.8" r="0.9" fill="#555"/></svg>
<span class="t" style="left:1482.05px;top:329.70px;font-size:15px;line-height:15px;color:#333;font-weight:400;transform:scaleX(1.0804);transform-origin:0 0;text-shadow:0.45px 0 0 currentColor;">Details</span>
<div style="position:absolute;left:1459.8px;top:357.7px;width:74.8px;height:2.2px;background:#1f7a62"></div>
<svg style="position:absolute;left:1565px;top:328px" width="12" height="18" viewBox="0 0 12 18"><path d="M3 5 V13.5 A3 3 0 0 0 9 13.5 V4 A2 2 0 0 0 5 4 V12.5" fill="none" stroke="#888" stroke-width="1.5"/></svg>
<span class="t" style="left:1582.25px;top:329.70px;font-size:15px;line-height:15px;color:#616161;font-weight:400;transform:scaleX(1.0386);transform-origin:0 0;">Anhänge (0)</span>
<svg style="position:absolute;left:1798px;top:367px" width="11" height="8" viewBox="0 0 11 8"><path d="M1 7 L5.5 1 L10 7 Z" fill="#8a8a8a" stroke="#8a8a8a" stroke-linejoin="round"/></svg>
<div style="position:absolute;left:1799.2px;top:383px;width:8.8px;height:232px;background:#8a8a8a;border-radius:4.4px"></div>
<svg style="position:absolute;left:1798px;top:986px" width="11" height="8" viewBox="0 0 11 8"><path d="M1 1 L5.5 7 L10 1 Z" fill="#8a8a8a" stroke="#8a8a8a" stroke-linejoin="round"/></svg>
<span class="t" style="left:1459.38px;top:378.64px;font-size:18.5px;line-height:18.5px;color:#262626;font-weight:400;transform:scaleX(1.0172);transform-origin:0 0;text-shadow:0.45px 0 0 currentColor;">Supportvereinbarung</span>
<span class="t" style="left:1459.60px;top:428.75px;font-size:14px;line-height:14px;color:#616161;font-weight:400;transform:scaleX(1.0261);transform-origin:0 0;">Debitor für Supportguthaben</span>
<div style="position:absolute;left:1758px;top:440.2px;width:8px;height:1.5px;background:#2a8577"></div>
<span class="t" style="left:1459.60px;top:457.85px;font-size:14px;line-height:14px;color:#616161;font-weight:400;transform:scaleX(1.0195);transform-origin:0 0;">Debitonamen</span>
<div style="position:absolute;left:1758px;top:469.3px;width:8px;height:1.5px;background:#2a8577"></div>
<span class="t" style="left:1459.60px;top:488.15px;font-size:14px;line-height:14px;color:#616161;font-weight:400;transform:scaleX(1.0326);transform-origin:0 0;">Supportart</span>
<span class="t" style="left:1597.86px;top:488.15px;font-size:14px;line-height:14px;color:#333;font-weight:400;transform:scaleX(1.0127);transform-origin:0 0;">Abrechnung nach Aufwand</span>
<span class="t" style="left:1459.60px;top:517.15px;font-size:14px;line-height:14px;color:#616161;font-weight:400;transform:scaleX(1.0301);transform-origin:0 0;">Hotlinevertrag</span>
<span class="t" style="left:1737.06px;top:517.15px;font-size:14px;line-height:14px;color:#2a8577;font-weight:400;transform:scaleX(1.0317);transform-origin:0 0;">Nein</span>
<span class="t" style="left:1459.60px;top:560.55px;font-size:14px;line-height:14px;color:#333;font-weight:400;transform:scaleX(1.0619);transform-origin:0 0;text-shadow:0.45px 0 0 currentColor;">Supportguthaben</span>
<span class="t" style="left:1459.60px;top:584.55px;font-size:14px;line-height:14px;color:#616161;font-weight:400;transform:scaleX(1.0114);transform-origin:0 0;">Aktuelles Supportguthaben</span>
<span class="t" style="left:1740.36px;top:584.55px;font-size:14px;line-height:14px;color:#2a8577;font-weight:400;transform:scaleX(0.9859);transform-origin:0 0;">0,00</span>
<span class="t" style="left:1459.60px;top:607.55px;font-size:14px;line-height:14px;color:#616161;font-weight:400;transform:scaleX(1.0007);transform-origin:0 0;">Erbrachte Supportleistung</span>
<span class="t" style="left:1740.36px;top:607.55px;font-size:14px;line-height:14px;color:#2a8577;font-weight:400;transform:scaleX(0.9859);transform-origin:0 0;">0,00</span>
<span class="t" style="left:1459.60px;top:631.05px;font-size:14px;line-height:14px;color:#616161;font-weight:400;transform:scaleX(1.0101);transform-origin:0 0;">Übriges Supportguthaben</span>
<span class="t" style="left:1740.36px;top:631.05px;font-size:14px;line-height:14px;color:#333;font-weight:400;transform:scaleX(0.9859);transform-origin:0 0;">0,00</span>
<div style="position:absolute;left:1460px;top:706.5px;width:306px;height:1.6px;background:#b0b0b8"></div>
<span class="t" style="left:1459.38px;top:726.84px;font-size:18.5px;line-height:18.5px;color:#262626;font-weight:400;transform:scaleX(0.9790);transform-origin:0 0;text-shadow:0.45px 0 0 currentColor;">Ticket Factbox</span>
<span class="t" style="left:1459.60px;top:777.45px;font-size:14px;line-height:14px;color:#616161;font-weight:400;transform:scaleX(1.0069);transform-origin:0 0;">Tickets - Offen</span>
<span class="t" style="left:1758.36px;top:777.45px;font-size:14px;line-height:14px;color:#2a8577;font-weight:400;transform:scaleX(1.0775);transform-origin:0 0;">0</span>
<span class="t" style="left:1459.60px;top:807.05px;font-size:14px;line-height:14px;color:#616161;font-weight:400;transform:scaleX(1.0042);transform-origin:0 0;">Tickets - In Bearbeitung</span>
<span class="t" style="left:1758.36px;top:807.05px;font-size:14px;line-height:14px;color:#2a8577;font-weight:400;transform:scaleX(1.0775);transform-origin:0 0;">0</span>
<span class="t" style="left:1459.60px;top:835.65px;font-size:14px;line-height:14px;color:#616161;font-weight:400;transform:scaleX(1.0012);transform-origin:0 0;">Tickets - Warten</span>
<span class="t" style="left:1758.36px;top:835.65px;font-size:14px;line-height:14px;color:#2a8577;font-weight:400;transform:scaleX(1.0775);transform-origin:0 0;">0</span>
<span class="t" style="left:1459.60px;top:865.95px;font-size:14px;line-height:14px;color:#616161;font-weight:400;transform:scaleX(0.9717);transform-origin:0 0;">Tickets - Geschlossen</span>
<span class="t" style="left:1758.36px;top:865.95px;font-size:14px;line-height:14px;color:#2a8577;font-weight:400;transform:scaleX(1.0775);transform-origin:0 0;">0</span>
<div style="position:absolute;left:1460px;top:900.2px;width:306px;height:1.6px;background:#b0b0b8"></div>
<span class="t" style="left:1459.38px;top:921.34px;font-size:18.5px;line-height:18.5px;color:#262626;font-weight:400;transform:scaleX(1.0133);transform-origin:0 0;text-shadow:0.45px 0 0 currentColor;">Verk. An Deb. -Historie</span>
<span class="t" style="left:1459.60px;top:971.15px;font-size:14px;line-height:14px;color:#616161;font-weight:400;transform:scaleX(1.0411);transform-origin:0 0;">Debitorennr.</span>
<span class="t" style="left:1728.86px;top:971.15px;font-size:14px;line-height:14px;color:#2a8577;font-weight:400;transform:scaleX(0.9774);transform-origin:0 0;">10674</span>
<div style="position:absolute;left:29.8px;top:932px;width:40px;height:40px;border-radius:6px;background:#3f80ea"></div>
<div style="position:absolute;left:45px;top:945.7px;width:3.8px;height:13.2px;background:#fff"></div>
<div style="position:absolute;left:51.8px;top:945.7px;width:3.8px;height:13.2px;background:#fff"></div>
<div style="position:absolute;left:90.3px;top:932.6px;width:39.7px;height:38.8px;border-radius:6px;background:#f9fafc;border:1px solid #e4e8ee;box-sizing:border-box"></div>
<div style="position:absolute;left:141px;top:932.6px;width:39.7px;height:38.8px;border-radius:6px;background:#f9fafc;border:1px solid #e4e8ee;box-sizing:border-box"></div>
<div style="position:absolute;left:191.5px;top:932.6px;width:39.7px;height:38.8px;border-radius:6px;background:#f9fafc;border:1px solid #e4e8ee;box-sizing:border-box"></div>
<svg style="position:absolute;left:95px;top:938px" width="30" height="28" viewBox="0 0 30 28"><path d="M7.8 11.3 A8 8 0 1 1 13.8 21.9" fill="none" stroke="#45a3df" stroke-width="1.3"/><path d="M10.5 12.5 A4.9 4.9 0 1 1 16 18.8" fill="none" stroke="#45a3df" stroke-width="1.3"/><path d="M14.2 14.8 L7.5 17.4 L10.5 18.2 L11.4 21.2 Z" fill="none" stroke="#45a3df" stroke-width="1.2" stroke-linejoin="round"/></svg>
<svg style="position:absolute;left:152px;top:943.5px" width="17" height="17" viewBox="0 0 17 17"><path d="M1.5 15.5 L2.5 11.5 L11.5 2.5 A1.6 1.6 0 0 1 14.5 5.5 L5.5 14.5 Z M10.5 3.5 L13.5 6.5 M2.5 11.5 L5.5 14.5" fill="none" stroke="#45a3df" stroke-width="1.2" stroke-linejoin="round"/></svg>
<svg style="position:absolute;left:202px;top:943.5px" width="18" height="17" viewBox="0 0 18 17"><path d="M2 10.5 L9.5 3 A2 2 0 0 1 12.3 3 L15 5.7 A2 2 0 0 1 15 8.5 L7.5 16 A2 2 0 0 1 4.7 16 L2 13.3 A2 2 0 0 1 2 10.5 Z M6 6.5 L11.5 12" fill="none" stroke="#45a3df" stroke-width="1.2"/></svg>
<div style="position:absolute;left:241.5px;top:932.6px;width:38.7px;height:38.8px;border-radius:6px;background:#f9fafc;border:1px solid #e4e8ee;box-sizing:border-box"></div>
<div style="position:absolute;left:243.6px;top:934.7px;width:34.4px;height:34.4px;border-radius:4px;background:#ac12e6"></div>
<div style="position:absolute;left:0px;top:1002px;width:1920px;height:78px;background:#000"></div>
</body></html>
